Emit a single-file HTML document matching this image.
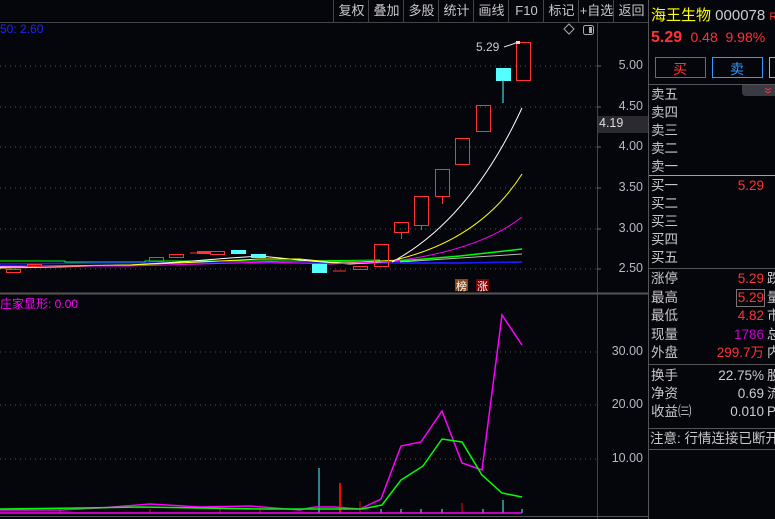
<!DOCTYPE html>
<html><head><meta charset="utf-8"><style>
body{margin:0;width:775px;height:519px;background:#05050c;overflow:hidden;font-family:"Liberation Sans","Noto Sans CJK SC",sans-serif;position:relative}
.t{position:absolute;white-space:nowrap}
.tb{position:absolute;top:0;height:22px;line-height:21px;font-size:13px;color:#c8c8c8;border-left:1px solid #444;text-align:center}
.r{position:absolute;left:651px;font-size:13.5px;color:#c8c8c8;line-height:18px;white-space:nowrap}
.v{position:absolute;font-size:13.5px;line-height:18px;text-align:right;white-space:nowrap}
</style></head><body>
<svg width="775" height="519" style="position:absolute;left:0;top:0">
<line x1="0" y1="22.5" x2="648" y2="22.5" stroke="#444"/>
<line x1="597.5" y1="22" x2="597.5" y2="519" stroke="#444"/>
<line x1="648.5" y1="0" x2="648.5" y2="519" stroke="#555"/>
<line x1="0" y1="293.5" x2="648" y2="293.5" stroke="#555" stroke-width="2"/>
<line x1="0" y1="516.5" x2="648" y2="516.5" stroke="#555"/>
<g stroke="#555" stroke-dasharray="1,4">
<line x1="0" y1="66" x2="597" y2="66"/><line x1="0" y1="107" x2="597" y2="107"/><line x1="0" y1="147" x2="597" y2="147"/><line x1="0" y1="188" x2="597" y2="188"/><line x1="0" y1="229" x2="597" y2="229"/><line x1="0" y1="269" x2="597" y2="269"/>
<line x1="0" y1="352" x2="597" y2="352"/><line x1="0" y1="405" x2="597" y2="405"/><line x1="0" y1="459" x2="597" y2="459"/>
</g>
<g stroke="#666"><line x1="597" y1="66" x2="601" y2="66"/><line x1="597" y1="107" x2="601" y2="107"/><line x1="597" y1="147" x2="601" y2="147"/><line x1="597" y1="188" x2="601" y2="188"/><line x1="597" y1="229" x2="601" y2="229"/><line x1="597" y1="269" x2="601" y2="269"/></g>
<polyline points="0,261 65,261 65,262 145,262 145,261 300,261 380,260" stroke="#0f0" fill="none"/>
<polyline points="0,264 100,263 200,263 300,263 400,263 460,263 522,262" stroke="#1a1aff" fill="none" stroke-width="1.5"/>
<polyline points="0,267 40,266 130,265 180,262 230,258 260,256 280,258 310,261 350,264 400,261" stroke="#fff" fill="none"/>
<polyline points="0,268 60,267 130,265 200,262 260,259 300,259 330,262 360,262 400,260" stroke="#ff0" fill="none"/>
<polyline points="0,266 130,266 200,264 270,262 330,264 400,261" stroke="#f0f" fill="none"/>
<path d="M392,262 Q470,220 522,108" stroke="#fff" fill="none"/>
<path d="M395,260 Q480,240 522,174" stroke="#ff0" fill="none"/>
<path d="M395,261 Q480,250 522,217" stroke="#f0f" fill="none"/>
<path d="M400,261 L460,256 L522,249" stroke="#0f0" fill="none" stroke-width="1.5"/>
<path d="M400,262 L460,258 L522,254" stroke="#bbb" fill="none"/>
<path d="M400,263 L460,263 L522,262" stroke="#1a1aff" fill="none" stroke-width="1.5"/>
<g fill="none" stroke="#f33">
<rect x="6.5" y="269.5" width="14" height="3"/><rect x="27.5" y="264.5" width="14" height="2"/><rect x="149.5" y="257.5" width="14" height="4"/><rect x="169.5" y="254.5" width="14" height="3"/><rect x="210.5" y="251.5" width="14" height="3"/>
<rect x="353.5" y="266.5" width="14" height="3"/><rect x="374.5" y="244.5" width="14" height="22"/><rect x="394.5" y="222.5" width="14" height="10"/><rect x="414.5" y="196.5" width="14" height="29"/><rect x="435.5" y="169.5" width="14" height="27"/><rect x="455.5" y="138.5" width="14" height="26"/><rect x="476.5" y="105.5" width="14" height="26"/><rect x="516.5" y="42.5" width="14" height="38"/>
<line x1="401.5" y1="232" x2="401.5" y2="239"/><line x1="421.5" y1="226" x2="421.5" y2="230"/><line x1="442.5" y1="197" x2="442.5" y2="204"/><line x1="190" y1="253" x2="200" y2="253"/><line x1="333" y1="271" x2="346" y2="271"/>
</g>
<rect x="197" y="251" width="14" height="3" fill="#f33"/>
<g fill="#5ff">
<rect x="231" y="250" width="15" height="4"/><rect x="251" y="254" width="15" height="4"/><rect x="312" y="264" width="15" height="9"/><rect x="496" y="68" width="15" height="13"/><rect x="502.5" y="81" width="1" height="22"/>
</g>
<path d="M504,47 L513,44 L518,42" stroke="#ddd" fill="none"/>
<rect x="516" y="41" width="4" height="3" fill="#fcc"/>
<rect x="455" y="279" width="13" height="12" fill="#8b4513"/>
<rect x="476" y="279" width="13" height="12" fill="#7a0000"/>
<g stroke-width="2">
<line x1="319" y1="468" x2="319" y2="513" stroke="#5ff" stroke-width="1"/>
<line x1="340" y1="483" x2="340" y2="513" stroke="#f00"/>
<line x1="360" y1="501" x2="360" y2="513" stroke="#f00" stroke-width="1"/>
<line x1="462" y1="503" x2="462" y2="513" stroke="#f00" stroke-width="1"/>
<line x1="503" y1="500" x2="503" y2="513" stroke="#5ff" stroke-width="1"/>
</g>
<g stroke="#5ff"><line x1="381" y1="509" x2="381" y2="513"/><line x1="401" y1="509" x2="401" y2="513"/><line x1="421" y1="509" x2="421" y2="513"/><line x1="442" y1="509" x2="442" y2="513"/><line x1="483" y1="509" x2="483" y2="513"/><line x1="522" y1="509" x2="522" y2="513"/></g>
<g stroke="#f00"><line x1="60" y1="508" x2="60" y2="513"/><line x1="150" y1="509" x2="150" y2="513"/><line x1="220" y1="509" x2="220" y2="513"/><line x1="260" y1="508" x2="260" y2="513"/></g>
<line x1="0" y1="513" x2="522" y2="513" stroke="#f0f" stroke-width="1.5"/>
<polyline points="0,510 60,510 100,508 150,504 200,507 250,506 300,510 309,508 316,507 334,507 360,509 381,499 401,446 421,442 442,411 462,463 482,470 502,315 522,345" stroke="#f0f" fill="none" stroke-width="1.5"/>
<polyline points="0,509 80,508 140,507 200,508 260,509 362,509 382,505 401,480 423,466 442,439 462,442 482,475 502,493 522,497" stroke="#0f0" fill="none" stroke-width="1.5"/>
<line x1="649" y1="84.5" x2="775" y2="84.5" stroke="#555"/>
<line x1="649" y1="175.5" x2="775" y2="175.5" stroke="#d99a2b"/>
<line x1="649" y1="268.5" x2="775" y2="268.5" stroke="#555"/>
<line x1="649" y1="364.5" x2="775" y2="364.5" stroke="#555"/>
<line x1="649" y1="428.5" x2="775" y2="428.5" stroke="#555"/>
<line x1="649" y1="449.5" x2="775" y2="449.5" stroke="#555"/>
<path d="M742,85 L775,85 L775,96 L746,96 Q742,96 742,92Z" fill="#3a3a42"/>
<path d="M765,88 l3,2 l3,-2 M765,91 l3,2 l3,-2" stroke="#f33" fill="none"/>
<rect x="655.5" y="57.5" width="50" height="20" fill="none" stroke="#e33"/>
<rect x="712.5" y="57.5" width="50" height="20" fill="none" stroke="#39f"/>
<rect x="769.5" y="57.5" width="8" height="20" fill="none" stroke="#aaa"/>
<rect x="736.5" y="289.5" width="28" height="17" fill="none" stroke="#777"/>
<path d="M564,29 l5,-5 l5,5 l-5,5z" stroke="#aaa" fill="none"/>
<rect x="583.5" y="25.5" width="10" height="9" rx="2" fill="none" stroke="#aaa"/>
<rect x="589" y="27" width="3" height="6" fill="#aaa"/>
<rect x="598" y="116" width="50" height="17" fill="#2a2a30"/>
</svg>
<div class="tb" style="left:333px;width:35px">复权</div><div class="tb" style="left:368px;width:35px">叠加</div><div class="tb" style="left:403px;width:35px">多股</div><div class="tb" style="left:438px;width:35px">统计</div><div class="tb" style="left:473px;width:35px">画线</div><div class="tb" style="left:508px;width:35px">F10</div><div class="tb" style="left:543px;width:35px">标记</div><div class="tb" style="left:578px;width:35px">+自选</div><div class="tb" style="left:613px;width:35px">返回</div>
<div class="t" style="left:0;top:22px;font-size:12px;color:#2222ff">50: 2.60</div>
<div class="t" style="left:476px;top:40px;font-size:12px;color:#ccc">5.29</div>
<div class="t" style="left:456px;top:278px;font-size:11px;color:#fff">榜</div>
<div class="t" style="left:477px;top:278px;font-size:11px;color:#fff">涨</div>
<div class="t" style="left:0;top:295px;font-size:12px;color:#f0f">庄家显形: 0.00</div>
<div style="position:absolute;left:598px;width:45px;text-align:right;font-size:12.5px;color:#b8b8c8">
<div class="t" style="right:0;top:58px">5.00</div><div class="t" style="right:0;top:99px">4.50</div><div class="t" style="right:0;top:139px">4.00</div><div class="t" style="right:0;top:180px">3.50</div><div class="t" style="right:0;top:221px">3.00</div><div class="t" style="right:0;top:261px">2.50</div>
<div class="t" style="right:0;top:344px">30.00</div><div class="t" style="right:0;top:397px">20.00</div><div class="t" style="right:0;top:451px">10.00</div></div>
<div class="t" style="left:599px;top:116px;font-size:12.5px;color:#ddd">4.19</div>
<div class="t" style="left:651px;top:4px;font-size:15px;color:#ff0">海王生物 <span style="color:#ccc">000078</span> <span style="color:#f33;font-size:11px">R</span></div>
<div class="t" style="left:651px;top:29px;font-size:16px;color:#f33;font-weight:bold">5.29 <span style="font-weight:normal;font-size:14px">&nbsp;0.48 &nbsp;9.98%</span></div>
<div class="t" style="left:673px;top:59px;font-size:14px;color:#f33">买</div>
<div class="t" style="left:730px;top:59px;font-size:14px;color:#39f">卖</div>
<div class="r" style="top:86px">卖五</div><div class="r" style="top:104px">卖四</div><div class="r" style="top:122px">卖三</div><div class="r" style="top:140px">卖二</div><div class="r" style="top:158px">卖一</div>
<div class="r" style="top:177px">买一</div><div class="r" style="top:195px">买二</div><div class="r" style="top:213px">买三</div><div class="r" style="top:231px">买四</div><div class="r" style="top:249px">买五</div>
<div class="r" style="top:270px">涨停</div><div class="r" style="top:289px">最高</div><div class="r" style="top:307px">最低</div><div class="r" style="top:326px">现量</div><div class="r" style="top:344px">外盘</div>
<div class="r" style="top:367px">换手</div><div class="r" style="top:385px">净资</div><div class="r" style="top:403px">收益㈢</div>
<div class="r" style="top:430px;left:650px">注意: 行情连接已断开</div>
<div style="position:absolute;right:11px;top:0;width:100px">
<div class="v" style="right:0;top:177px;color:#f33">5.29</div>
<div class="v" style="right:0;top:270px;color:#f33">5.29</div><div class="v" style="right:0;top:289px;color:#f33">5.29</div><div class="v" style="right:0;top:307px;color:#f33">4.82</div><div class="v" style="right:0;top:326px;color:#c0c">1786</div><div class="v" style="right:0;top:344px;color:#f33">299.7万</div>
<div class="v" style="right:0;top:367px;color:#ccc">22.75%</div><div class="v" style="right:0;top:385px;color:#ccc">0.69</div><div class="v" style="right:0;top:403px;color:#ccc">0.010</div></div>
<div style="position:absolute;left:767px;top:0;font-size:13.5px;color:#ccc;line-height:18px">
<div class="t" style="top:270px">跌</div><div class="t" style="top:289px">量</div><div class="t" style="top:307px">市</div><div class="t" style="top:326px">总</div><div class="t" style="top:344px">内</div><div class="t" style="top:367px">股</div><div class="t" style="top:385px">流</div><div class="t" style="top:403px">P</div></div>
</body></html>
